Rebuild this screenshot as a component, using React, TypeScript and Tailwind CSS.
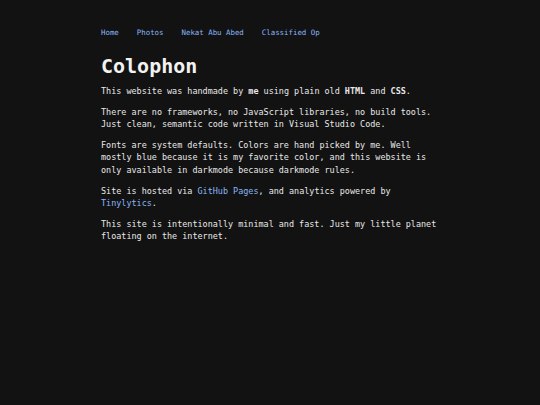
import React from "react";

export default function App() {
  const mono = { fontFamily: '"DejaVu Sans Mono", monospace' };
  return (
    <div className="min-h-[405px] w-full bg-[#121212] text-[#e8e8e8]" style={mono}>
      <div className="mx-auto w-[338px] pt-[27px]">
        <nav className="flex gap-[18px] text-[7.4px] leading-[12px] text-[#8ab4f8]">
          <a>Home</a>
          <a>Photos</a>
          <a>Nekat Abu Abed</a>
          <a>Classified Op</a>
        </nav>
        <h1 className="mt-[15px] text-[20px] font-bold leading-[24px] text-[#f2f2f2]">Colophon</h1>
        <div className="mt-[7px] flex flex-col gap-[8.4px] text-[8.45px] leading-[12.4px]">
          <p>
            This website was handmade by <b>me</b> using plain old <b>HTML</b> and <b>CSS</b>.
          </p>
          <p>
            There are no frameworks, no JavaScript libraries, no build tools. Just clean, semantic code
            written in Visual Studio Code.
          </p>
          <p>
            Fonts are system defaults. Colors are hand picked by me. Well mostly blue because it is my
            favorite color, and this website is only available in darkmode because darkmode rules.
          </p>
          <p>
            Site is hosted via <a className="text-[#8ab4f8]">GitHub Pages</a>, and analytics powered by{" "}
            <a className="text-[#8ab4f8]">Tinylytics</a>.
          </p>
          <p>
            This site is intentionally minimal and fast. Just my little planet floating on the internet.
          </p>
        </div>
      </div>
    </div>
  );
}
